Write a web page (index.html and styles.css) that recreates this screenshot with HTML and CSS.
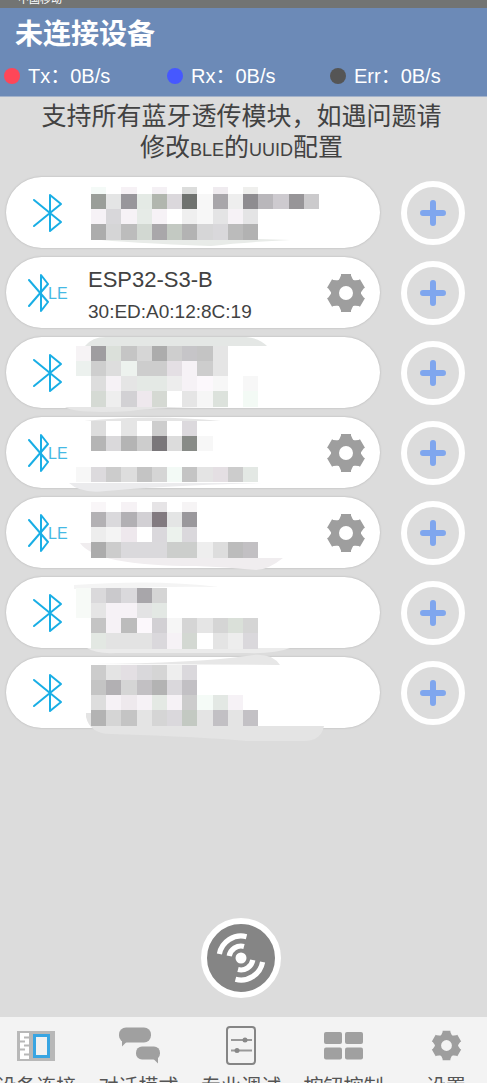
FILE: index.html
```html
<!DOCTYPE html>
<html lang="zh-CN">
<head>
<meta charset="utf-8">
<meta name="viewport" content="width=device-width, initial-scale=1">
<title>未连接设备</title>
<link rel="stylesheet" href="styles.css">
</head>
<body>
<svg class="symbols" aria-hidden="true">
  <symbol id="bt" viewBox="0 0 40 44"><path d="M6 9 33 31 22 40V4l11 9L6 35" fill="none" stroke="#19aee5" stroke-width="2" stroke-linejoin="round" stroke-linecap="round"/></symbol>
  <symbol id="ble" viewBox="0 0 40 44"><path d="M1 9 20 31 13 40V4l7 9L1 35" fill="none" stroke="#19aee5" stroke-width="2" stroke-linejoin="round" stroke-linecap="round"/><text x="20" y="28" font-size="16" font-family="Liberation Sans, sans-serif" fill="#45b9e4">LE</text></symbol>
  <symbol id="gear" viewBox="-20 -20 40 40">
    <circle r="11" fill="none" stroke="#9e9e9e" stroke-width="8"/>
    <g fill="#9e9e9e">
      <path id="teeth" d="M-7.500-12-5-17.500V-19H5v1.500L7.500-12zM-7.500 12-5 17.500V19H5v-1.500L7.500 12z"/>
      <use href="#teeth" transform="rotate(60)"/>
      <use href="#teeth" transform="rotate(120)"/>
    </g>
  </symbol>
  <symbol id="plus" viewBox="0 0 26 26"><path d="M13 3v20M3 13h20" stroke="#7fa6ee" stroke-width="6" stroke-linecap="round"/></symbol>
</svg>

<div class="status-bar">中国移动</div>

<header class="header">
  <h1 class="title">未连接设备</h1>
  <div class="stats">
    <div class="stat"><span class="dot dot-tx"></span>Tx：0B/s</div>
    <div class="stat"><span class="dot dot-rx"></span>Rx：0B/s</div>
    <div class="stat"><span class="dot dot-err"></span>Err：0B/s</div>
  </div>
</header>

<main class="main">
  <p class="hint">支持所有蓝牙透传模块，如遇问题请<br>修改<span class="latin">BLE</span>的<span class="latin">UUID</span>配置</p>

  <ul class="devices">
    <li class="row"><div class="card"><svg class="type"><use href="#bt"/></svg><svg class="mask" data-mask="0"></svg></div><button class="add" aria-label="添加"><svg><use href="#plus"/></svg></button></li>
    <li class="row"><div class="card"><svg class="type"><use href="#ble"/></svg><div class="info"><div class="name">ESP32-S3-B</div><div class="mac">30:ED:A0:12:8C:19</div></div><button class="config" aria-label="配置"><svg><use href="#gear"/></svg></button></div><button class="add" aria-label="添加"><svg><use href="#plus"/></svg></button></li>
    <li class="row"><div class="card"><svg class="type"><use href="#bt"/></svg><svg class="mask" data-mask="2"></svg></div><button class="add" aria-label="添加"><svg><use href="#plus"/></svg></button></li>
    <li class="row"><div class="card"><svg class="type"><use href="#ble"/></svg><svg class="mask" data-mask="3"></svg><button class="config" aria-label="配置"><svg><use href="#gear"/></svg></button></div><button class="add" aria-label="添加"><svg><use href="#plus"/></svg></button></li>
    <li class="row"><div class="card"><svg class="type"><use href="#ble"/></svg><svg class="mask" data-mask="4"></svg><button class="config" aria-label="配置"><svg><use href="#gear"/></svg></button></div><button class="add" aria-label="添加"><svg><use href="#plus"/></svg></button></li>
    <li class="row"><div class="card"><svg class="type"><use href="#bt"/></svg><svg class="mask" data-mask="5"></svg></div><button class="add" aria-label="添加"><svg><use href="#plus"/></svg></button></li>
    <li class="row"><div class="card"><svg class="type"><use href="#bt"/></svg><svg class="mask" data-mask="6"></svg></div><button class="add" aria-label="添加"><svg><use href="#plus"/></svg></button></li>
  </ul>

  <button class="scan" aria-label="扫描">
    <svg viewBox="-34 -34 68 68">
      <circle r="5.5" fill="#fff"/>
      <g fill="none" stroke="#fff" stroke-width="5.2">
        <path d="M-11.800-2A12 12 0 0 1 3-11.600M-21.600-4A22 22 0 0 1 5.500-21.300"/>
        <path d="M11.800 2A12 12 0 0 1-3 11.600M21.600 4A22 22 0 0 1-5.500 21.300"/>
      </g>
    </svg>
  </button>
</main>

<nav class="tabs">
  <a class="tab" href="#"><svg class="tab-icon" viewBox="0 0 40 40"><path fill="#b8b8b8" d="M1 6h38v30H1z"/><path fill="#fff" d="M4 8h9v26H4z"/><path d="M8 12.500h5M4 16.500h5M8 20.500h5M4 24.500h5M8 29.500h5" stroke="#b8b8b8" stroke-width="2"/><path d="M18.500 10.500h14v21h-14z" fill="#f1f1f1" stroke="#38a5e2" stroke-width="3"/></svg><span>设备连接</span></a>
  <a class="tab" href="#"><svg class="tab-icon" viewBox="0 0 40 40"><g fill="#a0a0a0"><rect y="2.500" width="32" height="15" rx="7"/><path d="M3 14v7.500l5-5z"/><rect x="17" y="21.500" width="24" height="13" rx="6"/><path d="M39 30v8.500l-5-5z"/></g></svg><span>对话模式</span></a>
  <a class="tab" href="#"><svg class="tab-icon" viewBox="0 0 40 40"><rect x="6" y="2" width="28" height="37" rx="3" fill="none" stroke="#858585" stroke-width="2"/><path d="M10 15h21M10 25.500h21" stroke="#999" stroke-width="2"/><circle cx="24" cy="15" r="2.500" fill="#888"/><circle cx="16" cy="25.500" r="2.500" fill="#888"/></svg><span>专业调试</span></a>
  <a class="tab" href="#"><svg class="tab-icon" viewBox="0 0 40 40"><g fill="#a0a0a0"><rect x="1" y="7" width="18" height="12" rx="2"/><rect x="22" y="7" width="18" height="12" rx="2"/><rect x="1" y="22.500" width="18" height="12" rx="2"/><rect x="22" y="22.500" width="18" height="12" rx="2"/></g></svg><span>按钮控制</span></a>
  <a class="tab" href="#"><svg class="tab-icon" viewBox="0 0 40 40"><use href="#gear" x="5" y="5" width="31" height="31"/></svg><span>设置</span></a>
</nav>
<script src="masks.js"></script>
</body>
</html>
```
FILE: styles.css
```css
* { box-sizing: border-box; }

body {
  margin: 0;
  height: 100vh;
  display: flex;
  flex-direction: column;
  overflow: hidden;
  background: #dcdcdc;
  color: #424242;
  font-family: "Liberation Sans", "Noto Sans CJK SC", sans-serif;
}

button {
  padding: 0;
  border: 0;
  background: none;
  flex: none;
}

.symbols { position: absolute; width: 0; height: 0; }

.status-bar {
  flex: none;
  height: 8px;
  padding: 0 18px 3px;
  display: flex;
  align-items: flex-end;
  overflow: hidden;
  background: #727473;
  color: #fff;
  font-size: 11px;
  line-height: 12px;
}

.header {
  flex: none;
  padding: 7px 0 6px;
  background: #6c8ab7;
  color: #fff;
  border-bottom: 1px solid #a3b2ca;
}

.title {
  margin: 0;
  padding-left: 15px;
  font-size: 28px;
  line-height: 40px;
  font-weight: 700;
}

.stats {
  display: grid;
  grid-template-columns: repeat(3, 1fr);
  column-gap: 6px;
  margin-top: 7px;
  padding-left: 4px;
}

.stat {
  display: flex;
  align-items: center;
  gap: 8px;
  font-size: 20px;
  line-height: 28px;
  white-space: nowrap;
}

.dot { width: 16px; height: 16px; border-radius: 50%; }
.dot-tx { background: #ff4658; }
.dot-rx { background: #4658ff; }
.dot-err { background: #555; }

.main {
  flex: 1;
  min-height: 0;
  display: flex;
  flex-direction: column;
  align-items: center;
  padding: 4px 0 19px;
}

.hint {
  margin: 0 4px 0 0;
  font-size: 25px;
  line-height: 31px;
  text-align: center;
  white-space: nowrap;
}

.latin { font-size: 18px; }

.devices {
  width: 100%;
  margin: 11px 0 0;
  padding: 0 22px 0 6px;
  list-style: none;
  display: flex;
  flex-direction: column;
  gap: 9px;
}

.row { display: flex; align-items: center; gap: 21px; }

.card {
  position: relative;
  flex: 1;
  min-height: 71px;
  padding: 0 14px 0 22px;
  display: flex;
  align-items: center;
  gap: 20px;
  border-radius: 36px;
  background: #fff;
  box-shadow: 0 0 2px #aaa;
}

.type { width: 40px; height: 44px; flex: none; }

.info { padding-top: 4px; }
.name { font-size: 22px; line-height: 28px; }
.mac { margin-top: 6px; font-size: 19px; line-height: 24px; }

.mask {
  position: absolute;
  left: 0;
  top: 0;
  width: 340px;
  height: 71px;
  overflow: visible;
  z-index: 1;
}

.config { margin-left: auto; width: 40px; height: 40px; }
.config svg { display: block; width: 40px; height: 40px; }

.add {
  width: 64px;
  height: 64px;
  border: 6px solid #fff;
  border-radius: 50%;
  display: grid;
  place-items: center;
}
.add svg { width: 26px; height: 26px; }

.scan {
  margin-top: auto;
  margin-right: 6px;
  width: 80px;
  height: 80px;
  border: 6px solid #fff;
  border-radius: 50%;
  background: #858585;
}
.scan svg { display: block; width: 100%; }

.tabs {
  flex: none;
  height: 66px;
  margin: 0 -10px 0 -15px;
  padding-top: 8px;
  display: grid;
  grid-template-columns: repeat(5, 1fr);
  overflow: hidden;
  background: #f3f3f3;
}

.tab {
  display: flex;
  flex-direction: column;
  align-items: center;
  gap: 8px;
  color: #555;
  font-size: 20px;
  line-height: 28px;
  text-decoration: none;
  white-space: nowrap;
}
.tab-icon { width: 40px; height: 40px; flex: none; overflow: visible; }
```
FILE: masks.js
```js
// Pixelated masks over hidden device names.
// Each row: [top, height, first column, colours]; "-" leaves a cell empty.
const CELL = 15.2;
const LEFT = 85;
const masks = {
  0: { smears: [["#e8ebe8", "M86 62H252L285 63Q240 65 205 69Q120 66 86 62Z"]], rows: [
    [10, 7, 0, "f4faf7 - f6f1f5 - f4f0f4 - dcdddc - efebef - efefed"],
    [17, 15, 0, "9a9e99 e4e5e5 98969b e4eae5 b1b6ae dbd8dc 6f726f f7f7f7 a8a6aa eeeeee 8e8c90 b9b7bb cdcacf 979598 cbcacc"],
    [32, 15, 0, "f6f2f6 d8d7da f6f2f6 e6ebe7 f6f2f6 ffffff efefef f7f7f7 e4e4e5 f6f2f6 e4e4e5"],
    [47, 16, 0, "acacac d5d5d6 bcbcbc d2d8d2 a9a7aa c3c9c2 b3b3b3 d6d6d7 d9d8db bbbbbb b2b2b2"]] },
  2: { smears: [["#e4e7e5", "M79 9Q86 0 100 0H240Q253 1 261 9Z"], ["#e6e6e6", "M59 70H224Q150 70 125 74Q70 77 59 70Z"]], rows: [
    [9, 15, -1, "f6f3f5 9f9da0 dbe0da c5c5c5 d6d6d6 acacac cecece c6c5c8 c4c4c4 e5e5e5"],
    [24, 15, -1, "ecf1ee cecece dddddd edf2ee cdcdcd cdcdcd e4dfe4 f6f2f6 cdcdcd e5e5e5"],
    [39, 15, 0, "dddddd f6f2f6 e5e5e5 e4e9e5 e4e9e5 ededed f6f2f6 fcf8fc f7f7f7 - f7f7f7"],
    [54, 16, 0, "d5dad4 eeeeee d2d1d4 eee8ed d5d9d3 ffffff e5e5e5 f6f6f6 dce2dc - f3faf5"]] },
  3: { smears: [["#e5e5e5", "M78 4Q145 -3 215 4Z"], ["#ebebed", "M63 66H256Q150 69 100 74Q75 77 63 66Z"]], rows: [
    [4, 15, 0, "dddddd ffffff e5e5e5 ffffff cdcdcd ffffff dcd9dd"],
    [19, 15, 0, "b5b5b5 dad9db b4b4b4 cdcdcd 7a777a dcdcdc 888b87 f7f7f7"],
    [50, 15, -1, "f7f7f7 dcdadd cccccc dddddd c4c4c4 d5d5d5 f3faf6 c4c4c4 e4e4e4 e4dfe3 cccccc e3e8e4"]] },
  4: { smears: [["#f0edef", "M74 46H250V61L277 61Q262 73 250 73Q220 70 190 69Q90 69 74 46Z"]], rows: [
    [5, 10, 0, "f9f6f8 - f6f2f5 - e6e4e6 - f6f4f5"],
    [15, 15, 0, "b3b1b4 dad9dc b2b0b4 d2d0d4 827a80 e4e5e5 9a989c"],
    [30, 15, 0, "ededed f4f4f4 eee8ed ffffff dad8dc ecf2ed dad8dc"],
    [45, 16, 0, "acacac cccccc dad9dc dad9dc dad9dc cccecc cccecc eeeeee dddddd bcbcbc c2c0c3"]] },
  5: { smears: [["#f4f4f4", "M68 8Q150 2 213 10Q150 9 120 12H68Z"], ["#ebebeb", "M81 71H284Q270 77 240 76H110Q90 77 81 71Z"]], rows: [
    [11, 15, -1, "f7faf7 dad9db cac9cc dad9dc a8a6aa d5d5d5"],
    [26, 15, -1, "f7faf7 e5e5e5 f6f2f6 f6f2f6 e3e3e4 e3e8e4"],
    [41, 15, 0, "c4c4c4 f6f2f6 bcbcbc fcf8fc d2d0d4 f6f6f6 d5d5d5 e5e5e5 d5d5d5 dae0d9 d5d5d5"],
    [56, 16, 0, "e3e8e3 e3e3e3 e3e3e3 e3e3e3 dad8dc f6f2f6 d3d8d2 ffffff e4e4e4 ededed dad8dc"]] },
  6: { smears: [["#e7e7e7", "M84 7Q190 6 240 -1Q265 -6 274 8Z"], ["#e4e4e4", "M80 56V60Q84 77 105 77Q200 80 240 84H298Q315 84 318 69H240V56Z"]], rows: [
    [8, 15, 0, "cccccc e4e4e4 e3dfe3 d9d8db d5d5d5 eeeeee dad8dc"],
    [23, 15, 0, "c4c4c4 b2b0b3 d5d5d5 c2c0c3 b3b3b3 dad8dc c2c0c4"],
    [38, 15, 0, "dddddd f6f2f6 eee9ed f6f2f6 e4e9e4 f6f2f6 cccccc f5fbf7 e3e8e4 f6f2f6"],
    [53, 16, 0, "b3b3b3 d5d5d5 c4c4c4 e4e4e4 d5d5d5 dad8dc c3c9c2 e4e4e4 c2c0c4 e4e4e4 c3c1c5"]] }
};

document.querySelectorAll("[data-mask]").forEach((svg) => {
  const mask = masks[svg.dataset.mask];
  let out = mask.smears.map(([fill, d]) => `<path fill="${fill}" d="${d}"/>`).join("");
  for (const [top, height, start, colours] of mask.rows) {
    colours.split(" ").forEach((colour, i) => {
      if (colour === "-") return;
      const x = Math.round(LEFT + (start + i) * CELL);
      const end = Math.round(LEFT + (start + i + 1) * CELL);
      out += `<rect x="${x}" y="${top}" width="${end - x}" height="${height}" fill="#${colour}"/>`;
    });
  }
  svg.innerHTML = out;
});
```
